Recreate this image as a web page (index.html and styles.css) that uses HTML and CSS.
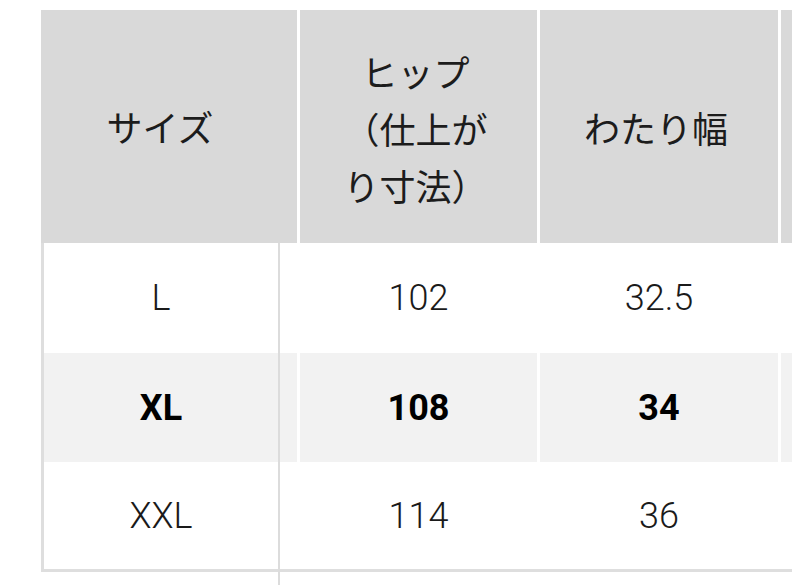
FILE: index.html
```html
<!DOCTYPE html>
<html lang="ja">
<head>
<meta charset="utf-8">
<link rel="stylesheet" href="styles.css">
</head>
<body>
<div class="viewport">
  <div class="sheet">
    <div class="row head">
      <div class="cell c1"><span>サイズ</span></div>
      <div class="cell c2"><span>ヒップ<br>（仕上が<br>り寸法）</span></div>
      <div class="cell c3"><span>わたり幅</span></div>
      <div class="cell c4"></div>
    </div>
    <div class="body">
      <div class="row data">
        <div class="cell c1b">L</div>
        <div class="cell c2">102</div>
        <div class="cell c3">32.5</div>
        <div class="cell c4"></div>
      </div>
      <div class="row data hl">
        <div class="cell c1b">XL</div>
        <div class="cell c2">108</div>
        <div class="cell c3">34</div>
        <div class="cell c4"></div>
      </div>
      <div class="row data last">
        <div class="cell c1b">XXL</div>
        <div class="cell c2">114</div>
        <div class="cell c3">36</div>
        <div class="cell c4"></div>
      </div>
    </div>
    <div class="vline"></div>
  </div>
</div>
</body>
</html>
```
FILE: styles.css
```css
html, body {
  margin: 0;
  padding: 0;
  background: #ffffff;
}

.viewport {
  width: 792px;
  height: 585px;
  overflow: hidden;
}

.sheet {
  position: relative;
  margin: 10px 0 0 41px;
  width: 980px;
}

.row {
  display: flex;
  gap: 3px;
}

.cell {
  display: flex;
  align-items: center;
  justify-content: center;
  text-align: center;
  box-sizing: border-box;
  flex: none;
}

.head {
  height: 233px;
}

.head .cell {
  background: #d9d9d9;
  font-family: "Noto Sans CJK JP", "Noto Sans", sans-serif;
  font-size: 36px;
  line-height: 57px;
  color: #1c1c1c;
  font-weight: 400;
}

.head .c1 {
  width: 256px;
  padding-right: 18px;
  padding-top: 0;
}

.c2 { width: 237px; }
.c3 { width: 238px; }
.c4 { width: 237px; }

.head .c2 span {
  display: block;
  padding-top: 4px;
  padding-right: 6px;
}

.head .c3 span {
  padding-top: 2px;
  padding-right: 6px;
}

.body {
  border-left: 3px solid #dedede;
  border-bottom: 3px solid #dedede;
}

.data {
  height: 110px;
  font-family: Roboto, "Liberation Sans", sans-serif;
  font-size: 36px;
  font-weight: 300;
  color: #1a1a1a;
}

.data.last {
  height: 107px;
}

.data .c1b {
  width: 253px;
  padding-right: 19px;
}

.hl {
  height: 109px;
  font-weight: 700;
  color: #000000;
}

.hl .cell {
  background: #f2f2f2;
}

.vline {
  position: absolute;
  left: 237px;
  top: 233px;
  width: 2px;
  height: 360px;
  background: #dcdcdc;
}
```
